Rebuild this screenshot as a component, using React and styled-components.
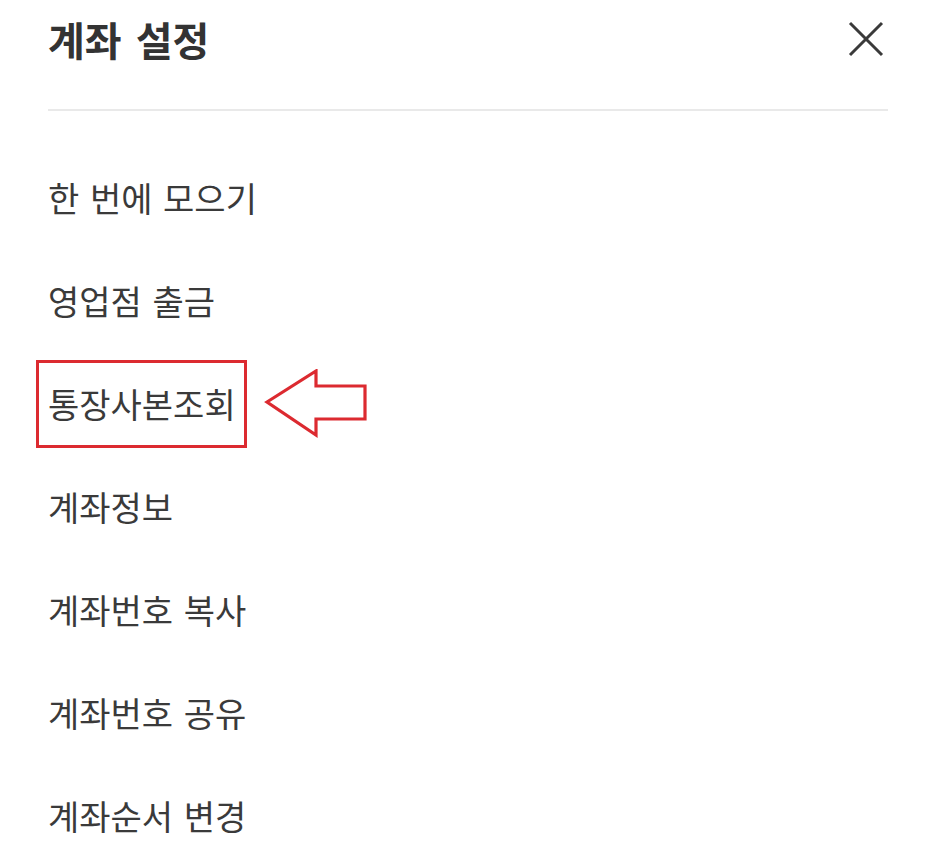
import React from "react";
import styled, { createGlobalStyle } from "styled-components";

const GlobalStyle = createGlobalStyle`
  html, body {
    margin: 0;
    padding: 0;
    background: #ffffff;
  }
  body {
    font-family: "Noto Sans CJK KR", "Noto Sans", sans-serif;
  }
`;

const Sheet = styled.div`
  width: 940px;
  height: 856px;
  padding: 0 52px 0 48px;
  box-sizing: border-box;
  overflow: hidden;
`;

const Header = styled.header`
  display: flex;
  align-items: center;
  justify-content: space-between;
  height: 111px;
  border-bottom: 2px solid #e9e9e9;
  padding-bottom: 32px;
  box-sizing: border-box;
`;

const Title = styled.h1`
  margin: 0;
  font-size: 40px;
  font-weight: 700;
  color: #333333;
  word-spacing: 5px;
`;

const CloseButton = styled.button`
  display: flex;
  align-items: center;
  justify-content: center;
  width: 40px;
  height: 40px;
  margin-right: 2px;
  padding: 0;
  border: none;
  background: transparent;
  cursor: pointer;
`;

const Menu = styled.ul`
  list-style: none;
  margin: 0;
  padding: 35px 0 0;
`;

const Item = styled.li`
  display: flex;
  align-items: center;
  gap: 17px;
  height: 103px;
`;

const Label = styled.span`
  font-size: 34px;
  font-weight: 400;
  color: #3a3a3a;
  line-height: 1;
  word-spacing: 3px;
  ${({ marked }) =>
    marked &&
    `
    display: inline-flex;
    align-items: center;
    height: 88px;
    box-sizing: border-box;
    margin-left: -12px;
    padding: 0 8px 0 9px;
    border: 3px solid #dc2a30;
  `}
`;

const CloseIcon = () => (
  <svg width="36" height="36" viewBox="0 0 36 36" fill="none">
    <path d="M2 2 L34 34 M34 2 L2 34" stroke="#3a3a3a" strokeWidth="3" />
  </svg>
);

const Arrow = () => (
  <svg width="104" height="70" viewBox="0 0 104 70" fill="none">
    <path
      d="M3 33 L52 2 L52 17 L101 17 L101 50 L52 50 L52 66 Z"
      stroke="#dc2a30"
      strokeWidth="3.2"
      strokeLinejoin="miter"
      fill="#ffffff"
    />
  </svg>
);

const items = [
  { label: "한 번에 모으기" },
  { label: "영업점 출금" },
  { label: "통장사본조회", marked: true },
  { label: "계좌정보" },
  { label: "계좌번호 복사" },
  { label: "계좌번호 공유" },
  { label: "계좌순서 변경" },
];

export default function App() {
  return (
    <>
      <GlobalStyle />
      <Sheet>
        <Header>
          <Title>계좌 설정</Title>
          <CloseButton aria-label="닫기">
            <CloseIcon />
          </CloseButton>
        </Header>
        <Menu>
          {items.map((it) => (
            <Item key={it.label}>
              <Label marked={it.marked}>{it.label}</Label>
              {it.marked && <Arrow />}
            </Item>
          ))}
        </Menu>
      </Sheet>
    </>
  );
}
